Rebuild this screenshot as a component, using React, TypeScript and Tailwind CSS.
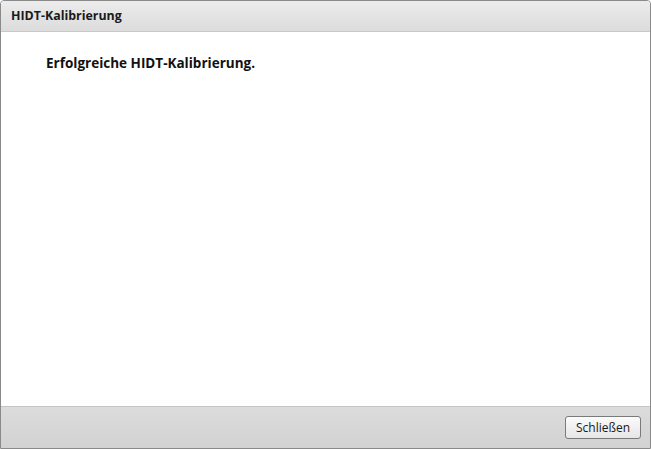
export default function App() {
  return (
    <div className="w-[651px] h-[449px] bg-white" style={{ fontFamily: '"Open Sans", "DejaVu Sans", sans-serif' }}>
      <div className="flex h-full w-full flex-col overflow-hidden rounded-t-[4px] border border-[#8a8a8a]">
        <div className="flex h-[31px] shrink-0 items-center border-b border-[#c9c9c9] bg-gradient-to-b from-[#ececec] to-[#dcdcdc] pl-[10px]">
          <span className="text-[12.4px] font-bold text-[#1a1a1a]">HIDT-Kalibrierung</span>
        </div>
        <div className="flex-1 bg-white pl-[45px] pt-[22px]">
          <p className="text-[13.5px] font-bold leading-[18px] text-[#111]">Erfolgreiche HIDT-Kalibrierung.</p>
        </div>
        <div className="flex h-[42px] shrink-0 items-center justify-end border-t border-[#c4c4c4] bg-gradient-to-b from-[#dcdcdc] to-[#d2d2d2] pr-[9px]">
          <button className="flex h-[23px] w-[76px] items-center justify-center rounded-[3px] border border-[#7a7a7a] bg-gradient-to-b from-[#fbfbfb] to-[#e6e6e6] text-[12px] text-[#1a1a1a]">
            Schließen
          </button>
        </div>
      </div>
    </div>
  );
}
